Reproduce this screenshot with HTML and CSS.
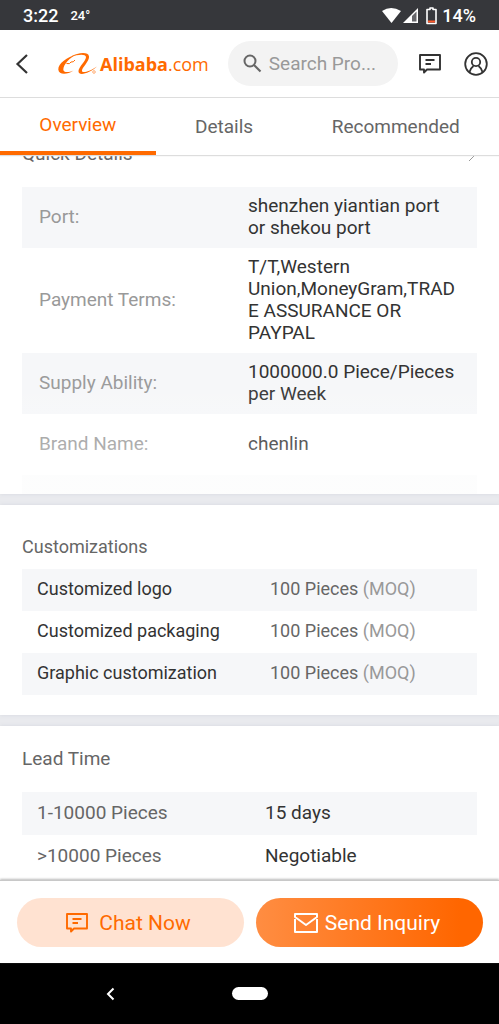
FILE: index.html
```html
<!DOCTYPE html>
<html lang="en">
<head>
<meta charset="utf-8">
<meta name="viewport" content="width=device-width, initial-scale=1">
<title>Alibaba.com</title>
<link rel="stylesheet" href="styles.css">
</head>
<body class="screen">
<div class="status">
  <span class="clock">3:22</span>
  <span class="temp">24°</span>
  <svg class="signals" width="58" height="20" viewBox="0 0 58 20" aria-hidden="true">
    <path d="M0 5Q9-1 19 5L9.500 17Z" fill="#fff"/>
    <path d="M21 17L36 2V17Z" fill="#fff"/>
    <path d="M30 10L34.500 5.500V15.500H30Z" fill="#67676b"/>
    <path d="M48 2h3v1.500h3v14h-9V3.500h3Z" fill="#36373b" stroke="#fff" stroke-width="1.600" stroke-linejoin="round"/>
    <path d="M46 14.500h7v2h-7Z" fill="#ff5a2c"/>
  </svg>
  <span class="battery">14%</span>
</div>
<header class="header">
  <button class="icon-btn" aria-label="Back"><svg width="14" height="22" viewBox="0 0 14 22"><path d="M12 2L2.500 11L12 20" fill="none" stroke="#333" stroke-width="2.200"/></svg></button>
  <a class="logo" href="#">
    <svg width="40" height="24" viewBox="0 0 40 24" aria-hidden="true">
      <path d="M19 2.500C9 4.500 0 12 .3 17.500C.8 23 9 23 15.500 18.500C11 20.500 5.500 21 5.300 17.500C5.500 12 12 5.500 19 2.500Z" fill="#ff6a00"/>
      <path d="M13 4.500C20 .5 30.500-.5 31 4.500C31.500 9 24.500 15 24 18.300C23.500 21.500 30 20.500 39 14.500C32 21 20 25 20.500 18.800C21 14.500 28 9 28 5C27.500 1.500 20 2.500 13 4.500Z" fill="#ff6a00"/>
      <path d="M8.500 11.500Q12 12.500 13 10Q15.500 10.500 17 8" fill="none" stroke="#ff6a00" stroke-width="1"/>
      <circle cx="36" cy="20" r="1.300" fill="none" stroke="#ff9a55" stroke-width=".8"/>
    </svg>
    <span class="wordmark"><b>Alibaba</b>.com</span>
  </a>
  <label class="search">
    <svg width="19" height="19" viewBox="0 0 19 19" aria-hidden="true"><circle cx="7" cy="7" r="5.500" fill="none" stroke="#666" stroke-width="2"/><path d="M11 11L17.500 17.500" stroke="#666" stroke-width="2.200"/></svg>
    <input class="search-input" type="text" placeholder="Search Pro..." aria-label="Search products">
  </label>
  <button class="icon-btn messages" aria-label="Messages"><svg width="24" height="22" viewBox="0 0 24 22"><path d="M2 2H22V16.500H9L6 19.500V16.500H2Z M7.500 7H16.500M7.500 11H13" fill="none" stroke="#333" stroke-width="1.900" stroke-linejoin="round"/></svg></button>
  <button class="icon-btn" aria-label="Account"><svg width="24" height="24" viewBox="0 0 24 24" fill="none" stroke="#333" stroke-width="1.800"><circle cx="12" cy="12" r="10.800"/><circle cx="12" cy="10" r="4.200"/><path d="M5.500 20C6 17.500 7.500 15.500 9.500 14M18.500 20C18 17.500 16.500 15.500 14.500 14"/></svg></button>
</header>
<nav class="tabs">
  <a class="tab active" href="#overview">Overview</a>
  <a class="tab" href="#details">Details</a>
  <a class="tab" href="#recommended">Recommended</a>
</nav>
<main class="content">
  <section class="card quick">
    <h2 class="title quick-title">Quick Details
      <svg width="9" height="16" viewBox="0 0 9 16" aria-hidden="true"><path d="M1 1L8 8L1 15" fill="none" stroke="#999" stroke-width="1"/></svg>
    </h2>
    <table class="table specs">
      <tr><th>Port:</th><td>shenzhen yiantian port or shekou port</td></tr>
      <tr><th>Payment Terms:</th><td>T/T,Western Union,MoneyGram,TRADE ASSURANCE OR PAYPAL</td></tr>
      <tr><th>Supply Ability:</th><td>1000000.0 Piece/Pieces per Week</td></tr>
      <tr><th>Brand Name:</th><td>chenlin</td></tr>
      <tr><th></th><td></td></tr>
    </table>
  </section>
  <section class="card custom">
    <h2 class="title">Customizations</h2>
    <table class="table options">
      <tr><th>Customized logo</th><td>100 Pieces <span class="moq">(MOQ)</span></td></tr>
      <tr><th>Customized packaging</th><td>100 Pieces <span class="moq">(MOQ)</span></td></tr>
      <tr><th>Graphic customization</th><td>100 Pieces <span class="moq">(MOQ)</span></td></tr>
    </table>
  </section>
  <section class="card lead">
    <h2 class="title lead-title">Lead Time</h2>
    <table class="table times">
      <tr><th>1-10000 Pieces</th><td>15 days</td></tr>
      <tr><th>&gt;10000 Pieces</th><td>Negotiable</td></tr>
    </table>
  </section>
</main>
<footer class="actions">
  <button class="action chat"><svg width="24" height="22" viewBox="0 0 24 22" aria-hidden="true"><path d="M2 2H22V16.500H9L6 19.500V16.500H2Z M7.500 7H16.500M7.500 11H13" fill="none" stroke="#ff6a00" stroke-width="1.900" stroke-linejoin="round"/></svg>Chat Now</button>
  <button class="action send"><svg width="24" height="20" viewBox="0 0 24 20" aria-hidden="true"><path d="M1 6V19H23V6M1 4V1H23V4L12 12Z" fill="none" stroke="#fff" stroke-width="2" stroke-linejoin="round"/></svg>Send Inquiry</button>
</footer>
<div class="system-nav">
  <button class="icon-btn sys-back" aria-label="System back"><svg width="9" height="14" viewBox="0 0 9 14"><path d="M7.500 1.500L2 7L7.500 12.500" fill="none" stroke="#fff" stroke-width="2"/></svg></button>
  <button class="home" aria-label="Home"></button>
  <span></span>
</div>
</body>
</html>
```
FILE: styles.css
```css
* { box-sizing: border-box; }

.screen {
  display: flex;
  flex-direction: column;
  height: 100vh;
  margin: 0;
  overflow: hidden;
  background: #fff;
  color: #333;
  font-family: Roboto, sans-serif;
  font-size: 19px;
  line-height: 22px;
}

button {
  border: 0;
  padding: 0;
  background: none;
  font: inherit;
}

a { text-decoration: none; }

svg { display: block; flex: none; }

.status {
  display: flex;
  align-items: center;
  flex: none;
  height: 30px;
  padding: 2px 23px 0;
  background: #36373b;
  color: #fff;
  font-size: 18px;
  font-weight: 500;
}

.temp { margin-left: 12px; font-size: 13px; }
.signals { margin-left: auto; }
.battery { margin-left: 2px; }

.header {
  display: flex;
  align-items: center;
  flex: none;
  height: 68px;
  padding: 0 11px 0 15px;
  border-bottom: 1px solid #ddd;
}

.icon-btn { display: flex; flex: none; }

.logo {
  display: flex;
  align-items: center;
  margin-left: 29px;
  color: #ff6a00;
}

.wordmark {
  margin-left: 2px;
  font-family: "Open Sans", sans-serif;
  font-size: 18px;
}

.search {
  display: flex;
  align-items: center;
  flex: 1;
  gap: 7px;
  min-width: 0;
  height: 45px;
  margin-left: 19px;
  padding: 0 15px;
  border-radius: 23px;
  background: #f3f3f3;
}

.search-input {
  width: 100%;
  min-width: 0;
  padding: 0;
  border: 0;
  outline: 0;
  background: none;
  color: #333;
  font: inherit;
}

.search-input::placeholder { color: #999; opacity: 1; }

.messages { margin: 0 22px 0 20px; }

.tabs {
  display: flex;
  flex: none;
  z-index: 1;
  height: 57px;
  background: #fff;
  box-shadow: 0 1px 1px #ddd;
}

.tab {
  display: flex;
  align-items: center;
  justify-content: center;
  flex: 1 1 auto;
  padding: 0 12px;
  color: #666;
}

.active { border-bottom: 4px solid #ff6a00; color: #ff6a00; }

.content {
  display: flex;
  flex-direction: column;
  flex: 1;
  gap: 11px;
  min-height: 0;
  overflow: hidden;
  background: #e9eaee;
}

.card {
  flex: none;
  padding: 0 22px;
  background: #fff;
  box-shadow: 0 0 4px #d6d8df;
}

.title {
  margin: 0;
  color: #666;
  font-size: 18px;
  font-weight: 400;
}

.quick { position: relative; height: 339px; overflow: hidden; }

.quick::after {
  content: "";
  position: absolute;
  inset: auto 0 0;
  height: 120px;
  background: linear-gradient(#fff0, #fff3 60%, #fffb 85%);
}

.quick-title {
  display: flex;
  align-items: center;
  justify-content: space-between;
  margin: -12px 0 22px;
  font-size: 19px;
}

.table { width: 100%; border-collapse: collapse; }
.table tr:nth-child(odd) { background: #f6f7f9; }
.table th { font-weight: 400; text-align: left; }
.table td { padding: 0; }

.specs tr { height: 61px; }
.specs th { width: 226px; padding: 0 0 2px 17px; color: #999; }
.specs td { padding: 8px 16px 9px 0; overflow-wrap: anywhere; }

.custom { padding: 31px 22px 22px; }

.options { margin-top: 11px; font-size: 18px; }
.options tr { height: 42px; }
.options th { width: 248px; padding: 0 0 2px 15px; }
.options td { padding-bottom: 2px; color: #666; }
.moq { color: #999; }

.quick + .custom { height: 210px; }

.lead { flex: 1 0 auto; padding-top: 22px; }
.lead-title { font-size: 19px; }

.times { margin-top: 22px; }
.times tr { height: 43px; }
.times th { width: 243px; padding: 0 0 2px 15px; color: #666; }
.times td { padding-bottom: 2px; }

.actions {
  display: flex;
  flex: none;
  z-index: 1;
  gap: 12px;
  padding: 17px 16px 16px 17px;
  border-top: 1px solid #c8c8c8;
  background: #fff;
  box-shadow: 0 -1px 2px #bbb;
}

.action {
  display: flex;
  align-items: center;
  justify-content: center;
  flex: 1;
  height: 49px;
  padding-right: 5px;
  border-radius: 25px;
  font-size: 21px;
}

.chat { gap: 10px; background: #ffe2d1; color: #ff6a00; }
.send { gap: 7px; background: linear-gradient(90deg, #ff8d42, #ff6600 90%); color: #fff; }

.system-nav {
  display: grid;
  grid-template-columns: 1fr auto 1fr;
  align-items: center;
  flex: none;
  height: 61px;
  background: #000;
}

.sys-back { justify-self: center; padding-right: 10px; }
.home { width: 36px; height: 13px; border-radius: 7px; background: #fff; }
```
